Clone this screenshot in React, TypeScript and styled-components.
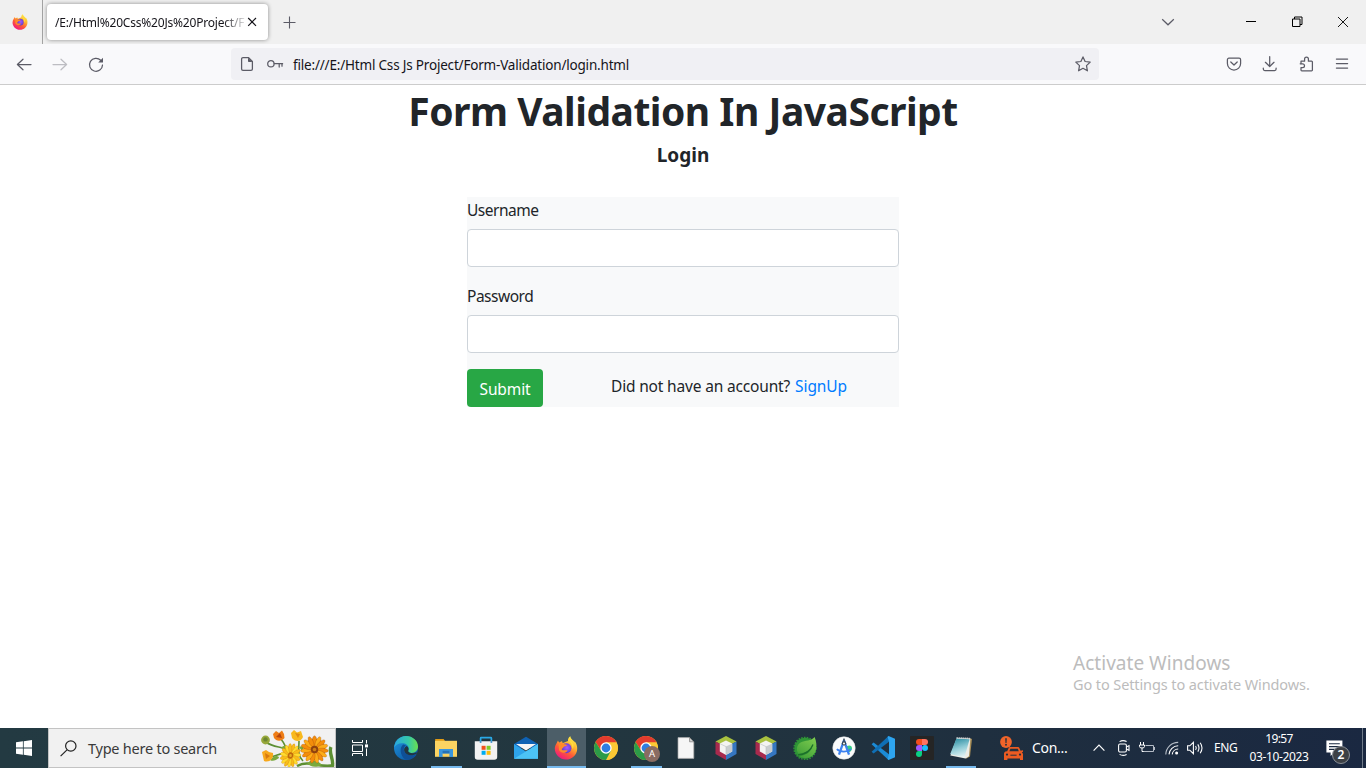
import React from 'react';
import styled, { createGlobalStyle } from 'styled-components';

const Global = createGlobalStyle`
  * { box-sizing: border-box; }
  html, body { margin: 0; padding: 0; overflow: hidden; background: #fff; }
  body { font-family: "Noto Sans", "Open Sans", sans-serif; color: #212529; }
`;

const Screen = styled.div`
  width: 1366px;
  height: 768px;
  display: flex;
  flex-direction: column;
  overflow: hidden;
`;

const Text = styled.span<{ $size: number; $ls?: number; $lh?: number; $color?: string }>`
  font-size: ${p => p.$size}px;
  letter-spacing: ${p => p.$ls ?? 0}px;
  line-height: ${p => (p.$lh ? `${p.$lh}px` : 'normal')};
  color: ${p => p.$color ?? 'inherit'};
  white-space: pre;
  display: block;
`;

const Icon = styled.svg<{ $ml?: number; $mr?: number }>`
  display: block;
  flex: none;
  overflow: visible;
  margin-left: ${p => p.$ml ?? 0}px;
  margin-right: ${p => p.$mr ?? 0}px;
`;

/* ---------- browser chrome ---------- */

const TabStrip = styled.div`
  height: 44px;
  flex: none;
  display: flex;
  align-items: center;
  background: #f0f0f0;
`;

const PinnedTab = styled.div`
  width: 43px;
  height: 44px;
  padding-left: 12px;
  display: flex;
  align-items: center;
  border-right: 1px solid #a3a3a3;
`;

const ActiveTab = styled.div`
  margin-left: 4px;
  width: 221px;
  height: 36px;
  padding: 0 11px 0 8px;
  display: flex;
  align-items: center;
  background: #fff;
  border-radius: 4px;
  box-shadow: 0 0 4px rgba(0, 0, 0, 0.42);
  color: #15141a;
`;

const TabTitle = styled.div`
  width: 192px;
  height: 20px;
  padding-top: 2px;
  mask-image: linear-gradient(to right, #000 168px, transparent 193px);
`;

const NewTab = styled.div`
  margin-left: 15px;
`;

const WindowControls = styled.div`
  margin-left: auto;
  display: flex;
  align-items: center;
  padding-right: 17px;
`;

const Toolbar = styled.div`
  height: 41px;
  flex: none;
  display: flex;
  align-items: center;
  background: #f9f9fb;
  border-bottom: 1px solid #cccccc;
`;

const NavButtons = styled.div`
  width: 231px;
  padding-left: 16px;
  display: flex;
  gap: 20px;
`;

const UrlBar = styled.div`
  width: 868px;
  height: 32px;
  padding: 0 8px;
  display: flex;
  align-items: center;
  background: #f0f0f4;
  border-radius: 4px;
  color: #15141a;
`;

const UrlText = styled.div`
  flex: 1;
  margin-left: 10px;
  padding-top: 2px;
`;

const ToolbarActions = styled.div`
  margin-left: auto;
  padding-right: 16px;
  display: flex;
  gap: 20px;
`;

/* ---------- page ---------- */

const Page = styled.main`
  flex: 1;
  display: flex;
  flex-direction: column;
  align-items: center;
  padding-top: 2px;
  background: #fff;
`;

const Title = styled.h1`
  margin: 0;
  font-size: 39px;
  line-height: 48px;
  letter-spacing: -0.5px;
  font-weight: 700;
  white-space: nowrap;
`;

const Subtitle = styled.h2`
  margin: 8px 0 30px;
  font-size: 19px;
  line-height: 24px;
  font-weight: 700;
`;

const Form = styled.form`
  width: 432px;
  background: #f8f9fa;
  display: flex;
  flex-direction: column;
`;

const Label = styled.label`
  display: block;
  font-size: 15.5px;
  line-height: 26px;
  letter-spacing: -0.49px;
  margin-bottom: 6px;
`;

const Input = styled.input`
  display: block;
  width: 100%;
  height: 38px;
  margin: 0 0 16px;
  border: 1px solid #ced4da;
  border-radius: 4px;
  background: #fff;
`;

const FormFooter = styled.div`
  display: flex;
  align-items: flex-start;
`;

const Submit = styled.button`
  width: 76px;
  height: 38px;
  padding: 2px 0 0;
  border: 0;
  border-radius: 4px;
  background: #28a745;
  color: #fff;
  font-family: inherit;
  font-size: 15.5px;
  letter-spacing: -0.12px;
`;

const Prompt = styled.div`
  margin-left: 68px;
  display: flex;
  gap: 5px;
`;

const Watermark = styled.aside`
  align-self: flex-end;
  width: 293px;
  margin-top: auto;
  padding-bottom: 33px;
  color: #bcbcbc;
`;

/* ---------- taskbar ---------- */

const Taskbar = styled.footer`
  height: 40px;
  flex: none;
  display: flex;
  background: linear-gradient(to right, #233a42 0%, #22363f 45%, #1f2f3f 72%, #1a2841 100%);
  color: #fff;
`;

const StartButton = styled.div`
  width: 48px;
  display: flex;
  align-items: center;
  justify-content: center;
`;

const SearchBox = styled.div`
  width: 288px;
  display: flex;
  align-items: center;
  padding-left: 11px;
  background: #f1f1f1;
  border: 1px solid #c3c3c3;
  overflow: hidden;
`;

const SearchLabel = styled.div`
  width: 173px;
  margin-left: 11px;
`;

const TaskViewButton = styled.div`
  width: 50px;
  padding-left: 16px;
  display: flex;
  align-items: center;
`;

const TaskbarApp = styled.div<{ $narrow?: boolean; $active?: boolean; $line?: number }>`
  width: ${p => (p.$narrow ? 39 : 40)}px;
  padding-right: ${p => (p.$narrow ? 1 : 0)}px;
  height: 40px;
  flex: none;
  display: flex;
  align-items: center;
  justify-content: center;
  background: ${p => (p.$active ? 'linear-gradient(#4c5e68,#4c5e68) 1px 0 / 39px 40px no-repeat' : 'none')};
  &::after {
    content: '';
    display: ${p => (p.$line ? 'block' : 'none')};
    align-self: flex-end;
    width: ${p => p.$line ?? 0}px;
    height: 2px;
    margin-left: ${p => -(12 + (p.$line ?? 0) / 2)}px;
    margin-right: ${p => 12 - (p.$line ?? 0) / 2}px;
    background: #76b9ed;
  }
`;

const Tray = styled.div`
  display: flex;
  flex: 1;
  align-items: center;
  padding-left: 18px;
`;

const Traffic = styled.div`
  width: 61px;
  padding-left: 7px;
`;

const Language = styled.div`
  width: 26px;
  margin-left: 10px;
`;

const Clock = styled.div`
  width: 60px;
  margin-left: 9px;
  display: flex;
  flex-direction: column;
  align-items: center;
  padding-bottom: 1px;
`;

const Notifications = styled.div`
  margin-left: 17px;
  width: 37px;
  height: 40px;
  position: relative;
  display: flex;
  align-items: center;
  border-right: 1px solid #6f7a88;
`;

const Badge = styled.span`
  position: absolute;
  left: 6px;
  top: 18px;
  width: 18px;
  height: 18px;
  border-radius: 50%;
  border: 1px solid #8a8f96;
  background: #3c4045;
  color: #fff;
  font-size: 12px;
  line-height: 16px;
  font-weight: 600;
  text-align: center;
`;

/* ---------- drawings ---------- */

function Firefox({ size, id }: { size: number; id: string }) {
  return (
    <Icon width={size} height={size} viewBox="0 0 24 24">
      <defs>
        <linearGradient id={`${id}b`} x1="0.8" y1="0.05" x2="0.25" y2="0.95">
          <stop offset="0" stopColor="#fff04a" />
          <stop offset="0.35" stopColor="#ffb02e" />
          <stop offset="0.65" stopColor="#ff5a36" />
          <stop offset="1" stopColor="#f0197e" />
        </linearGradient>
        <radialGradient id={`${id}p`} cx="0.55" cy="0.45" r="0.6">
          <stop offset="0" stopColor="#a259ff" />
          <stop offset="1" stopColor="#5b3bc4" />
        </radialGradient>
      </defs>
      <path d="M2.6 7.2 C3.2 6 3.8 5.2 4 4.6 C4.3 5.6 5 6.3 5.6 6.6 C6.4 5.6 7.6 5.2 8.2 5.2 C8 6 8.4 6.6 9 7 L14 5 C13.6 3 14.8 1.2 16.4 0.3 C16.4 2.2 18 3.4 19.4 4.8 C20.2 5.6 20.4 6 20.6 6.4 C20.8 5.8 20.6 5.2 20.4 4.9 C22.4 7 23.4 9.8 23.2 13 C22.9 19 18 23.6 12 23.6 C5.8 23.6 0.8 18.6 0.8 12.6 C0.8 10.6 1.6 8.8 2.6 7.2 Z" fill={`url(#${id}b)`} />
      <circle cx="12.4" cy="12.2" r="5" fill={`url(#${id}p)`} />
      <path d="M4.6 8.2 C6.6 7 9 7.2 10 8.2 C11.4 8.3 12.6 8.6 13 9.2 C12.2 10.4 10.2 10 9.6 11 C9 12 8 12.6 7.6 13.4 C9 15.2 11.6 13.8 13.6 14.4 C12 17.4 7 17.8 5 14 Z" fill="#ff8a2a" />
      <path d="M14.4 4.4 C17 6 18.8 9 18.4 13 C20.2 11 19.8 7.4 17.2 5.4 Z" fill="#ffdf3f" />
    </Icon>
  );
}

function Chrome({ children }: { children?: React.ReactNode }) {
  return (
    <Icon width="24" height="24" viewBox="0 0 24 24">
      <circle cx="12" cy="12" r="12" fill="#fcc934" />
      <path d="M12 6.4 L22.6 6.4 A12 12 0 0 0 1.61 6 L7.1 14.8 Z" fill="#e33b2e" />
      <path d="M16.9 14.8 L12 24 A12 12 0 0 0 22.6 6.4 L12 6.4 Z" fill="#fcc934" />
      <path d="M7.1 14.8 L1.61 6 A12 12 0 0 0 12 24 L16.9 14.8 Z" fill="#2c9b48" />
      <circle cx="12" cy="12" r="5.7" fill="#fff" />
      <circle cx="12" cy="12" r="4.4" fill="#2f7de1" />
      {children}
    </Icon>
  );
}

function NetBeans() {
  return (
    <Icon width="22" height="24" viewBox="0 0 22 24">
      <path d="M11 0 L21.5 5.5 L11 11 L0.5 5.5 Z" fill="#a9c23f" />
      <path d="M0.5 5.5 L11 11 V24 L0.5 18 Z" fill="#a82a4d" />
      <path d="M21.5 5.5 L11 11 V24 L21.5 18 Z" fill="#3577c2" />
      <path d="M11 4.6 L17.2 7.6 V15.4 L11 19 L4.8 15.4 V7.6 Z" fill="#f4f4f2" />
      <path d="M11 10.6 L17.2 7.6 V15.4 L11 19 Z" fill="#c9cdcf" />
      <path d="M4.8 7.6 L11 10.6 V19" fill="none" stroke="#b9bdbf" strokeWidth="0.6" />
    </Icon>
  );
}

function Daisy({ x, y, r, tone, alt, core }: { x: number; y: number; r: number; tone: string; alt: string; core: string }) {
  return (
    <g transform={`translate(${x} ${y})`}>
      <circle r={r * 0.8} fill={alt} />
      {Array.from({ length: 15 }, (_, i) => (
        <ellipse key={i} cx="0" cy={-r * 0.62} rx={r * 0.16} ry={r * 0.4} fill={i % 2 ? tone : alt} stroke={core} strokeWidth="0.25" transform={`rotate(${i * 24})`} />
      ))}
      <circle r={r * 0.27} fill={core} />
      <circle r={r * 0.13} fill={tone} opacity="0.6" />
    </g>
  );
}

function Bouquet() {
  return (
    <Icon width="74" height="38" viewBox="0 0 74 38">
      <g fill="none" stroke="#5d8f33" strokeWidth="1.6">
        <path d="M5 13 C14 20 22 16 32 24" />
        <path d="M20 10 C24 15 24 18 27 22" />
        <path d="M38 12 C38 20 36 26 42 32" />
        <path d="M8 28 C16 28 20 22 26 26" />
        <path d="M36 37 C48 30 60 40 73 36" strokeWidth="2.6" />
        <path d="M70 18 C67 24 74 32 71 38" strokeWidth="3.4" />
      </g>
      <path d="M20 19 C23 15 27 18 25 21 Z M38 18 C42 16 44 19 41 22 Z M9 31 C13 26 18 26 18 29 C15 31 12 33 9 31 Z M46 34 C52 29 58 32 61 36 C55 39 49 38 46 34 Z" fill="#7aa93c" />
      <circle cx="4.5" cy="11" r="4.4" fill="#97a83a" />
      <circle cx="4.5" cy="10.4" r="2.2" fill="#6c8632" />
      <path d="M12 5 L15 2 L18 4 L21 1.5 L23 5 L23.5 9 C20 13 15 12 13 9 Z" fill="#ee7d16" />
      <path d="M15 8 L19 4 L21 9 Z" fill="#b7450d" />
      <path d="M30 4 L33 1 L36 3.5 L40 2 L42 8 C40 13 34 13 31 9 Z" fill="#f8b91d" />
      <path d="M34 4 L37 9 L39 5 Z" fill="#e28c10" />
      <path d="M1 23 L5 21 L8 23 L12 24 C13 30 8 34 3 32 Z" fill="#f7a81c" />
      <path d="M4 24 L9 27 L5 30 Z" fill="#d8790f" />
      <g transform="rotate(18 29.5 26.5) translate(29.5 26.5) scale(0.84 1) translate(-29.5 -26.5)">
        <Daisy x={29.5} y={26.5} r={12} tone="#ffdc2e" alt="#f9bd1a" core="#c06a0c" />
      </g>
      <Daisy x={53.5} y={20.5} r={13.6} tone="#fdac18" alt="#f48d0b" core="#8f420f" />
    </Icon>
  );
}

const Line = styled.g`
  fill: none;
  stroke-width: 1.25;
  stroke-linecap: round;
  stroke-linejoin: round;
`;

export default function App() {
  return (
    <>
      <Global />
      <Screen>
        <TabStrip>
          <PinnedTab><Firefox size={16} id="fs" /></PinnedTab>
          <ActiveTab>
            <TabTitle><Text $size={12} $ls={-0.2} $lh={18}>/E:/Html%20Css%20Js%20Project/F</Text></TabTitle>
            <Icon width="10" height="10" viewBox="0 0 10 10">
              <path d="M1.2 1 L9 8.8 M9 1 L1.2 8.8" stroke="#15141a" strokeWidth="1.2" fill="none" />
            </Icon>
          </ActiveTab>
          <NewTab>
            <Icon width="13" height="13" viewBox="0 0 13 13"><path d="M6.5 0.5 V12.5 M0.5 6.5 H12.5" stroke="#5b5b66" strokeWidth="1.1" fill="none" /></Icon>
          </NewTab>
          <WindowControls>
            <Icon width="14" height="14" viewBox="0 0 14 14" $mr={71}><path d="M1.2 4.2 L7 9.8 L12.8 4.2" stroke="#5b5b66" strokeWidth="1.2" fill="none" /></Icon>
            <Icon width="10" height="10" viewBox="0 0 10 10" $mr={36}><rect x="0" y="4" width="10" height="1" fill="#000" /></Icon>
            <Icon width="11" height="11" viewBox="0 0 11 11" $mr={35}><path d="M0.5 2 H8 V9.5 H0.5 Z M2.5 2 V0 H10 V7.5 H8" stroke="#000" fill="none" /></Icon>
            <Icon width="11" height="11" viewBox="0 0 11 11"><path d="M0 0 L10 10 M10 0 L0 10" stroke="#000" fill="none" strokeWidth="0.9" /></Icon>
          </WindowControls>
        </TabStrip>

        <Toolbar>
          <NavButtons>
            <Icon width="16" height="16" viewBox="0 0 16 16"><Line stroke="#5b5b66"><path d="M15 8.5 H1.4 M7 3.2 L1.4 8.5 L7 13.8" /></Line></Icon>
            <Icon width="16" height="16" viewBox="0 0 16 16"><Line stroke="#bdbdc2"><path d="M1 8.5 H14.6 M9 3.2 L14.6 8.5 L9 13.8" /></Line></Icon>
            <Icon width="16" height="16" viewBox="0 0 16 16">
              <Line stroke="#5b5b66"><path d="M14.5 9 A6.5 6.5 0 1 1 12.7 4.3" /></Line>
              <path d="M15 1.8 V6.4 H10.2 Z" fill="#5b5b66" />
            </Icon>
          </NavButtons>
          <UrlBar>
            <Icon width="16" height="16" viewBox="0 0 16 16">
              <Line stroke="#5b5b66"><path d="M4 1.6 H9.6 L13.4 5.4 V13 A1.4 1.4 0 0 1 12 14.4 H4 A1.4 1.4 0 0 1 2.6 13 V3 A1.4 1.4 0 0 1 4 1.6 Z" /></Line>
              <path d="M9 1.6 L13.6 6 H9.8 A0.8 0.8 0 0 1 9 5.2 Z" fill="#5b5b66" />
            </Icon>
            <Icon width="16" height="16" viewBox="0 0 16 16" $ml={12}>
              <Line stroke="#5b5b66"><circle cx="3.9" cy="7.7" r="3.2" /><path d="M7.2 7.7 H15.6 M15 7.7 V10.2 M12.2 7.7 V11" /></Line>
            </Icon>
            <UrlText><Text $size={13.5} $ls={-0.19} $lh={32}>file:///E:/Html Css Js Project/Form-Validation/login.html</Text></UrlText>
            <Icon width="16" height="16" viewBox="0 0 16 16">
              <Line stroke="#5b5b66"><path d="M8 0.9 L10.1 5.5 L15.2 6.1 L11.5 9.6 L12.4 14.8 L8 12.3 L3.6 14.8 L4.5 9.6 L0.8 6.1 L5.9 5.5 Z" /></Line>
            </Icon>
          </UrlBar>
          <ToolbarActions>
            <Icon width="16" height="16" viewBox="0 0 16 16">
              <Line stroke="#5b5b66"><path d="M2.9 2.2 H13.1 A1.5 1.5 0 0 1 14.6 3.7 V7.6 A6.6 6.4 0 0 1 1.4 7.6 V3.7 A1.5 1.5 0 0 1 2.9 2.2 Z M4.8 6 L8 9 L11.2 6" /></Line>
            </Icon>
            <Icon width="16" height="16" viewBox="0 0 16 16">
              <Line stroke="#5b5b66"><path d="M7.7 0.6 V10.4 M3.4 6.3 L7.7 10.5 L12 6.3 M1.3 12 V13 A1.5 1.5 0 0 0 2.8 14.5 H12.6 A1.5 1.5 0 0 0 14.1 13 V12" /></Line>
            </Icon>
            <Icon width="16" height="16" viewBox="0 0 16 16">
              <Line stroke="#5b5b66"><path d="M3 7.4 V5.2 H6.6 V3 A1.9 1.9 0 0 1 10.4 3 V5.2 H13.6 A0.8 0.8 0 0 1 14.4 6 V14 A0.8 0.8 0 0 1 13.6 14.8 H3.8 A0.8 0.8 0 0 1 3 14 V11.6 H4.6 A1.9 1.9 0 0 0 4.6 7.8 H2.2" /></Line>
            </Icon>
            <Icon width="16" height="16" viewBox="0 0 16 16">
              <Line stroke="#5b5b66"><path d="M2.4 3 H13.6 M2.4 7.5 H13.6 M2.4 12 H13.6" /></Line>
            </Icon>
          </ToolbarActions>
        </Toolbar>

        <Page>
          <Title>Form Validation In JavaScript</Title>
          <Subtitle>Login</Subtitle>
          <Form>
            <Label htmlFor="user">Username</Label>
            <Input id="user" type="text" />
            <Label htmlFor="pass">Password</Label>
            <Input id="pass" type="password" />
            <FormFooter>
              <Submit type="button">Submit</Submit>
              <Prompt>
                <Text $size={15.5} $ls={-0.17} $lh={34}>Did not have an account?</Text>
                <Text $size={15.5} $ls={-0.08} $lh={34} $color="#007bff">SignUp</Text>
              </Prompt>
            </FormFooter>
          </Form>
          <Watermark>
            <Text $size={19} $ls={0.03} $lh={22}>Activate Windows</Text>
            <Text $size={14.5} $ls={-0.1} $lh={21}>Go to Settings to activate Windows.</Text>
          </Watermark>
        </Page>

        <Taskbar>
          <StartButton>
            <Icon width="16" height="16" viewBox="0 0 16 16"><path d="M0 2.3 L6.9 1.3 V7.6 H0 Z M7.7 1.2 L16 0 V7.6 H7.7 Z M0 8.4 H6.9 V14.7 L0 13.7 Z M7.7 8.4 H16 V16 L7.7 14.8 Z" fill="#fff" /></Icon>
          </StartButton>
          <SearchBox>
            <Icon width="17" height="17" viewBox="0 0 17 17"><g fill="none" stroke="#222" strokeWidth="1.2"><circle cx="10.8" cy="6" r="5.2" /><path d="M7 9.8 L0.6 16.2" /></g></Icon>
            <SearchLabel><Text $size={14.5} $ls={-0.24} $lh={38} $color="#3a3a3a">Type here to search</Text></SearchLabel>
            <Bouquet />
          </SearchBox>
          <TaskViewButton>
            <Icon width="16" height="16" viewBox="0 0 16 16">
              <path d="M0.5 0 V2.5 H10.5 V0 M0.5 5 H10.5 V11.5 H0.5 Z M0.5 16 V13.5 H10.5 V16 M14.5 0 V3.5 M14.5 8.5 V16" stroke="#fff" fill="none" />
              <rect x="13" y="4.4" width="3" height="3" fill="#fff" />
            </Icon>
          </TaskViewButton>

          <TaskbarApp>
            <Icon width="24" height="24" viewBox="0 0 24 24">
              <defs>
                <linearGradient id="eg1" x1="0" y1="0.3" x2="1" y2="0.3"><stop offset="0" stopColor="#2aa6e0" /><stop offset="0.6" stopColor="#35c9a8" /><stop offset="1" stopColor="#6be04e" /></linearGradient>
                <linearGradient id="eg2" x1="0" y1="0" x2="0.7" y2="1"><stop offset="0" stopColor="#2098e0" /><stop offset="1" stopColor="#0c59a4" /></linearGradient>
              </defs>
              <circle cx="12" cy="12" r="12" fill="url(#eg2)" />
              <path d="M0.2 11.6 C0.8 5 5.6 0 12 0 C19 0 24 5 24 10.6 C24 14.6 21 17 17.6 17 C15 17 13.6 16 14.2 14.8 C15.6 12.4 14.4 9 10.6 7.6 C6.4 6.2 1.6 8.4 0.2 11.6 Z" fill="url(#eg1)" />
              <path d="M9.2 8.6 C5.6 11 5.4 19 11.2 23.6 C17 24.4 21.2 21 22.6 18.4 C18 20.6 11.4 19.6 10 14.6 C9.4 12.4 10 10.6 12 9.4 Z" fill="#0f4f96" />
              <path d="M12.6 10 C10 11.4 9.8 13.6 10.4 15.2 C11.8 19.4 18 20.8 22.8 17.6 C23.2 16.8 23 16.2 22 16.6 C18.6 18 14 17 14.2 14.8 C15 13.2 14.6 11.2 12.6 10 Z" fill="#22353f" />
            </Icon>
          </TaskbarApp>
          <TaskbarApp $line={31}>
            <Icon width="24" height="24" viewBox="0 0 24 24">
              <path d="M1.2 3 H9.6 L11 5 H1.2 Z" fill="#e19b15" />
              <rect x="1" y="4.8" width="22" height="16" fill="#fcd462" />
              <path d="M5 21 V13 H19 V21 H15.4 V17.4 H8.6 V21 Z" fill="#3a96dd" />
              <rect x="8.6" y="14.8" width="6.8" height="2.6" fill="#2673b8" />
            </Icon>
          </TaskbarApp>
          <TaskbarApp>
            <Icon width="24" height="24" viewBox="0 0 24 24">
              <path d="M6.6 7 V2.2 Q6.6 1.6 7.2 1.6 H16.8 Q17.4 1.6 17.4 2.2 V7" fill="none" stroke="#2aa9e6" strokeWidth="1.7" />
              <path d="M0.8 5.2 H23.2 V21 A2.8 2.8 0 0 1 20.4 23.8 H3.6 A2.8 2.8 0 0 1 0.8 21 Z" fill="#f2f2f2" />
              <path d="M6.6 5.2 V6.8 M17.4 5.2 V6.8" stroke="#1f7fc0" strokeWidth="1.7" />
              <rect x="7.6" y="9.8" width="4" height="4" fill="#f1511b" /><rect x="12.6" y="9.8" width="4" height="4" fill="#80cc28" />
              <rect x="7.6" y="14.8" width="4" height="4" fill="#00adef" /><rect x="12.6" y="14.8" width="4" height="4" fill="#fbbc09" />
            </Icon>
          </TaskbarApp>
          <TaskbarApp>
            <Icon width="24" height="24" viewBox="0 0 24 24">
              <path d="M0 8 L12 0.8 L24 8 V12 H0 Z" fill="#0f62b4" />
              <path d="M0 8 L12 15.4 L24 8 V22.8 H0 Z" fill="#2ea3ea" />
              <path d="M24 8 L0 22.8 H24 Z" fill="#4cc3f5" />
              <path d="M2 8 H22 L12 14.4 Z" fill="#f5f5f5" />
            </Icon>
          </TaskbarApp>
          <TaskbarApp $active $line={39}><Firefox size={24} id="fl" /></TaskbarApp>
          <TaskbarApp><Chrome /></TaskbarApp>
          <TaskbarApp $line={31}>
            <Chrome>
              <circle cx="18" cy="18" r="8" fill="#8a6c62" />
              <text x="18" y="21.4" fontSize="9.5" fill="#fff" textAnchor="middle" fontFamily="Noto Sans, sans-serif">A</text>
            </Chrome>
          </TaskbarApp>
          <TaskbarApp>
            <Icon width="18" height="22" viewBox="0 0 18 22">
              <path d="M1 0.6 H12.6 L16.8 4.8 V21.4 H1 Z" fill="#f6f6f6" stroke="#a8a8a8" strokeWidth="0.7" />
              <path d="M12.6 0.6 V4.8 H16.8 Z" fill="#d4d4d4" stroke="#777" strokeWidth="0.7" />
            </Icon>
          </TaskbarApp>
          <TaskbarApp><NetBeans /></TaskbarApp>
          <TaskbarApp><NetBeans /></TaskbarApp>
          <TaskbarApp $narrow>
            <Icon width="24" height="24" viewBox="0 0 24 24">
              <defs><linearGradient id="sl" x1="0.8" y1="0" x2="0.2" y2="1"><stop offset="0" stopColor="#7ccb4e" /><stop offset="1" stopColor="#3f9f38" /></linearGradient></defs>
              <circle cx="12" cy="12.4" r="10.6" fill="#2f9636" />
              <circle cx="12" cy="12.4" r="11" fill="none" stroke="#2f9636" strokeWidth="1.4" strokeDasharray="1.6 1.2" />
              <path d="M21.6 1 C18.6 5 12 4.2 7.6 6.6 C3.4 9.2 3.2 14.4 5.2 17.4 C11 17.8 16.6 15 19.6 9.6 C18.4 15.8 13 19.6 6.8 20.2 C12.6 24 20.6 21.6 22.8 14.6 C24 10.4 23.4 5.2 21.6 1 Z" fill="url(#sl)" />
              <path d="M5 18.8 C12 18.4 17.4 15.4 20 8.4" fill="none" stroke="#1c6f2a" strokeWidth="1.3" />
            </Icon>
          </TaskbarApp>
          <TaskbarApp $narrow>
            <Icon width="24" height="24" viewBox="0 0 24 24">
              <circle cx="12" cy="12" r="11.2" fill="#fbfbfb" stroke="#e6e6e6" strokeWidth="0.6" />
              <path d="M15 10 C18 8.6 20 10 20 12.4 C20 15 17 17 15 16 Z" fill="#36cf85" />
              <path d="M12 4.4 L7 18.6 M12 4.4 L17 18.6" stroke="#3d82f0" strokeWidth="2.3" fill="none" />
              <path d="M4.8 13.2 C8 16.4 15.6 16.4 19 13.2" stroke="#3d82f0" strokeWidth="1.7" fill="none" />
              <circle cx="12" cy="7.2" r="2.2" fill="#35475a" /><circle cx="12" cy="7.4" r="1" fill="#fff" />
              <rect x="11.2" y="2.6" width="1.6" height="2.6" fill="#35475a" />
            </Icon>
          </TaskbarApp>
          <TaskbarApp $narrow>
            <Icon width="24" height="24" viewBox="0 0 24 24">
              <path d="M0.6 8.2 L2.6 6.6 L18 18.2 V24 L17 23.4 Z" fill="#1b8bd6" />
              <path d="M0.6 15.8 L2.6 17.4 L18 5.8 V0 L17 0.6 Z" fill="#0f6fb5" />
              <path d="M17.6 0 L24 2.8 V21.2 L17.6 24 L16.6 23 L18 18.2 V5.8 L16.6 1 Z" fill="#2ea5f0" />
            </Icon>
          </TaskbarApp>
          <TaskbarApp $narrow>
            <Icon width="24" height="24" viewBox="0 0 24 24">
              <rect width="24" height="24" rx="1" fill="#252525" />
              <path d="M12 3 H9 A3 3 0 0 0 9 9 H12 Z" fill="#f24e1e" />
              <path d="M12 3 H15 A3 3 0 0 1 15 9 H12 Z" fill="#ff7262" />
              <path d="M12 9 H9 A3 3 0 0 0 9 15 H12 Z" fill="#a259ff" />
              <circle cx="15" cy="12" r="3" fill="#1abcfe" />
              <path d="M12 15 H9 A3 3 0 1 0 12 18 Z" fill="#0acf83" />
            </Icon>
          </TaskbarApp>
          <TaskbarApp $narrow $line={30}>
            <Icon width="24" height="24" viewBox="0 0 24 24">
              <defs><linearGradient id="np" x1="0.3" y1="0" x2="0.6" y2="1"><stop offset="0" stopColor="#2f8fa3" /><stop offset="0.5" stopColor="#8fcbd6" /><stop offset="1" stopColor="#e6f4f5" /></linearGradient></defs>
              <path d="M20.4 2 L23 3 L21 20.6 L17 22.8 Z" fill="#a58b55" />
              <path d="M7.8 2 L21.4 2.4 L20 20.2 L16.6 22.6 L1.4 19.6 Z" fill="#ecece6" />
              <path d="M7.4 2.6 L20.6 3.2 L15.4 21.4 L1.2 18 Z" fill="url(#np)" />
              <path d="M7.6 1.8 L21 2.4" stroke="#dadada" strokeWidth="1.4" strokeDasharray="1.2 0.8" />
            </Icon>
          </TaskbarApp>

          <Tray>
            <Icon width="26" height="24" viewBox="0 0 26 24">
              <circle cx="7" cy="6" r="5.9" fill="#f0642a" />
              <path d="M6.2 2.2 H7.8 L7.5 7 H6.5 Z" fill="#20303f" /><circle cx="7" cy="8.8" r="0.95" fill="#20303f" />
              <path d="M6.4 15.4 L8.2 15.2 L9.4 12.4 Q9.8 11 11.2 11 H18.8 Q20.2 11 20.6 12.4 L21.6 14.8 L24 14.2 V15.8 L22.8 16.4 Q24 17 24 18.2 V24 H21 V22.4 H8.4 V24 H5 V18.2 Q4.8 16.2 6.4 15.4 Z" fill="#ea5b22" />
              <path d="M10.4 15.2 L11.4 12.8 H18.8 L19.8 15.2 Z" fill="#20303f" />
              <circle cx="8" cy="18.6" r="1.1" fill="#20303f" /><circle cx="21" cy="18.6" r="1.1" fill="#20303f" />
              <path d="M11.4 19.2 H17.6" stroke="#20303f" />
            </Icon>
            <Traffic><Text $size={14} $ls={-0.29} $lh={40}>Con...</Text></Traffic>
            <Icon width="12" height="12" viewBox="0 0 12 12" $ml={7}><path d="M0.6 8.6 L6 3.2 L11.4 8.6" stroke="#fff" strokeWidth="1.2" fill="none" /></Icon>
            <Icon width="12" height="16" viewBox="0 0 12 16" $ml={13}>
              <g fill="none" stroke="#fff" strokeWidth="1.1">
                <rect x="0.6" y="4" width="7.8" height="8" rx="1.4" /><path d="M8.4 7 L11 5.6 V10.4 L8.4 9" /><path d="M1.6 1.6 Q5 -0.4 8.6 1.6 M1.6 14.4 Q5 16.4 8.6 14.4" />
              </g>
            </Icon>
            <Icon width="17" height="12" viewBox="0 0 17 12" $ml={9}>
              <path d="M1.5 0 V3 M4.5 0 V3 M0.5 3 H5.5 V4.6 Q5.5 6 3 6 Q0.5 6 0.5 4.6 Z M3 6 V9.5 H5" stroke="#fff" fill="none" strokeWidth="1" />
              <path d="M6.5 3.5 H14.5 V9.5 H4.5 M15.5 5 V8" stroke="#b5bcc6" fill="none" strokeWidth="1" />
            </Icon>
            <Icon width="14" height="14" viewBox="0 0 14 14" $ml={9}>
              <g fill="none" strokeWidth="1.1" stroke="#b9c0c9">
                <path d="M0.8 13.4 A12.4 12.4 0 0 1 13.2 1.4" /><path d="M4 13.4 A9.2 9.2 0 0 1 13.2 4.8" stroke="#fff" /><path d="M7.2 13.4 A6 6 0 0 1 13.2 8" stroke="#fff" />
              </g>
              <circle cx="11.6" cy="12" r="1.5" fill="#fff" />
            </Icon>
            <Icon width="17" height="14" viewBox="0 0 17 14" $ml={8}>
              <g fill="none" stroke="#fff" strokeWidth="1.1">
                <path d="M0.6 4.8 H2.8 L6.4 1.4 V12.6 L2.8 9.2 H0.6 Z M8.6 5 Q10 7 8.6 9 M10.8 3.4 Q13.2 7 10.8 10.6 M13.2 1.8 Q16.8 7 13.2 12.2" />
              </g>
            </Icon>
            <Language><Text $size={12} $ls={-0.34} $lh={40}>ENG</Text></Language>
            <Clock>
              <Text $size={12} $ls={-0.6} $lh={18}>19:57</Text>
              <Text $size={12} $ls={-0.36} $lh={18}>03-10-2023</Text>
            </Clock>
            <Notifications>
              <Icon width="17" height="17" viewBox="0 0 17 17"><path d="M0.4 0.4 H16.4 V12.6 H8 L4.6 16 V12.6 H0.4 Z" fill="#fff" /><path d="M3 3.8 H13.8 M3 6.6 H13.8 M3 9.4 H10" stroke="#1b2a41" strokeWidth="1.1" /></Icon>
              <Badge>2</Badge>
            </Notifications>
          </Tray>
        </Taskbar>
      </Screen>
    </>
  );
}
